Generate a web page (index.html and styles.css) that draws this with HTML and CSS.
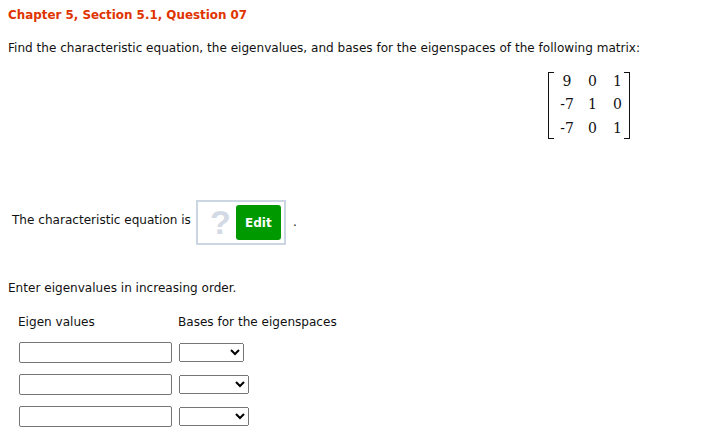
FILE: index.html
```html
<!DOCTYPE html>
<html lang="en">
<head>
    <meta charset="UTF-8">
    <meta name="viewport" content="width=device-width, initial-scale=1.0">
    <title>Question 07</title>
    <link rel="stylesheet" href="styles.css">
</head>
<body>
    <h1 class="title">Chapter 5, Section 5.1, Question 07</h1>
    <p class="prompt">Find the characteristic equation, the eigenvalues, and bases for the eigenspaces of the following matrix:</p>

    <div class="matrix">
        <div class="bracket left"></div>
        <div class="cells">
            <span>9</span><span>0</span><span>1</span>
            <span>-7</span><span>1</span><span>0</span>
            <span>-7</span><span>0</span><span>1</span>
        </div>
        <div class="bracket right"></div>
    </div>

    <div class="equation">
        <span class="equation-text">The characteristic equation is</span>
        <div class="answer-box">
            <span class="question-mark">?</span>
            <button class="edit">Edit</button>
        </div>
        <span class="dot">.</span>
    </div>

    <p class="order">Enter eigenvalues in increasing order.</p>

    <div class="headings">
        <span class="eigen-head">Eigen values</span>
        <span>Bases for the eigenspaces</span>
    </div>

    <div class="row">
        <input class="value" type="text">
        <select class="basis first"><option></option></select>
    </div>
    <div class="row">
        <input class="value" type="text">
        <select class="basis"><option></option></select>
    </div>
    <div class="row">
        <input class="value" type="text">
        <select class="basis"><option></option></select>
    </div>
</body>
</html>
```

FILE: styles.css
```css
html {
    height: 100%;
}
body {
    min-height: 100%;
    box-sizing: border-box;
    margin: 0;
    padding: 8px 8px 0;
    background: #fff;
    color: #111;
    font-family: "DejaVu Sans", Verdana, sans-serif;
    font-size: 12.07px;
    line-height: 15px;
}
.title {
    margin: 0;
    color: #e03400;
    font-size: 11.9px;
    font-weight: bold;
    line-height: 15px;
}
.prompt {
    margin: 18px 0 0;
}
.matrix {
    display: flex;
    width: 82px;
    height: 67px;
    margin: 16px 0 0 540px;
}
.bracket {
    flex: none;
    width: 5px;
    border: 1px solid #111;
}
.bracket.left {
    border-right: none;
}
.bracket.right {
    margin-left: -6px;
    border-left: none;
}
.cells {
    flex: none;
    display: grid;
    grid-template-columns: 26px 25px 25px;
    grid-auto-rows: 23.25px;
    align-items: center;
    justify-items: center;
    margin-top: -2px;
    font-family: "DejaVu Serif", serif;
    font-size: 14px;
}
.equation {
    display: flex;
    align-items: center;
    margin: 61px 0 0 4px;
}
.equation-text {
    margin-bottom: 5px;
}
.answer-box {
    display: flex;
    align-items: center;
    width: 90px;
    height: 45px;
    box-sizing: border-box;
    margin-left: 5px;
    border: 2px solid #ccd5e2;
    padding-left: 12px;
}
.question-mark {
    width: 26px;
    color: #d3dae5;
    font-family: "Liberation Sans", Arial, sans-serif;
    font-size: 34px;
    font-weight: bold;
}
.edit {
    width: 45px;
    height: 35px;
    padding: 0;
    border: none;
    border-radius: 3px;
    background: #009900;
    color: #fff;
    font-family: "DejaVu Sans", Verdana, sans-serif;
    font-size: 12px;
    font-weight: bold;
}
.dot {
    margin-left: 7px;
}
.order {
    margin: 36px 0 0;
}
.headings {
    display: flex;
    margin: 19px 0 0 10px;
}
.eigen-head {
    width: 160px;
}
.row {
    display: flex;
    align-items: center;
    gap: 7px;
    height: 20px;
    margin: 12px 0 0 11px;
}
.value {
    width: 153px;
    height: 21px;
    box-sizing: border-box;
    padding: 0;
    border: 1px solid #767676;
    border-radius: 2px;
}
.basis {
    width: 70px;
    height: 19px;
    box-sizing: border-box;
}
.basis.first {
    width: 65px;
}
```
